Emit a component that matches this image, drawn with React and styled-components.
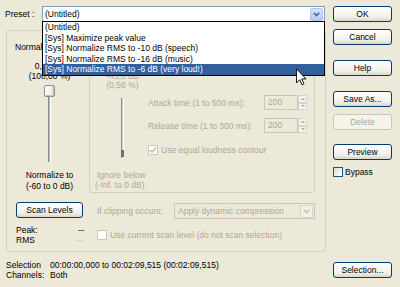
import React from 'react';
import styled, { createGlobalStyle } from 'styled-components';

const Global = createGlobalStyle`
  html, body { margin: 0; padding: 0; background: #ECE9D8; }
  body {
    font-family: "Liberation Sans", Arial, sans-serif;
    font-size: 8.5px;
    color: #000;
  }
  * { box-sizing: border-box; }
`;

const DISABLED = '#ACA899';
const GROUP = '#D0D0BF';

const Dialog = styled.div`
  position: relative;
  width: 400px;
  height: 287px;
  padding-top: 6px;
  display: grid;
  grid-template-columns: 327px 59px;
  column-gap: 6px;
  overflow: hidden;
  line-height: 10px;
`;

const LeftPanel = styled.div`
  padding-left: 6px;
  display: flex;
  flex-direction: column;
`;

const PresetRow = styled.div`
  display: flex;
  align-items: center;
  height: 16px;
`;

const PresetLabel = styled.span`
  width: 37px;
  margin-left: -1px;
`;

const Combo = styled.div`
  position: relative;
  width: 283px;
  height: 16px;
  background: #fff;
  border: 1px solid #7F9DB9;
  display: flex;
  align-items: center;
  padding-left: 2px;
`;

const ComboText = styled.span`
  flex: 1;
  color: ${p => (p.$disabled ? DISABLED : '#000')};
  white-space: nowrap;
`;

const DropButton = styled.div`
  width: 13px;
  height: 13px;
  margin-right: 1px;
  border-radius: 2px;
  display: flex;
  align-items: center;
  justify-content: center;
  background: ${p =>
    p.$disabled
      ? '#F0EFE8'
      : 'linear-gradient(#D6E2FC, #B7CAF5)'};
  border: 1px solid ${p => (p.$disabled ? '#D8D6CC' : '#B1C5F2')};
`;

const DropList = styled.div`
  position: absolute;
  top: 14px;
  left: -1px;
  width: 283px;
  background: #fff;
  border: 1px solid #000;
  z-index: 5;
`;

const DropItem = styled.div`
  height: 10.6px;
  line-height: 10.6px;
  padding-left: 2px;
  white-space: nowrap;
  background: ${p => (p.$selected ? '#30609E' : '#fff')};
  color: ${p => (p.$selected ? '#fff' : '#000')};
`;

const OuterGroup = styled.div`
  margin-top: 8px;
  width: 320px;
  height: 222px;
  border: 1px solid ${GROUP};
  border-radius: 3px;
  padding: 0 10px 0 9px;
  display: grid;
  grid-template-columns: 67px 226px;
  grid-template-rows: 162px 1fr;
  column-gap: 6px;
`;

const SliderCol = styled.div`
  display: flex;
  flex-direction: column;
  align-items: center;
  text-align: center;
  white-space: nowrap;
  color: ${p => (p.$disabled ? DISABLED : '#000')};
`;

const Line = styled.div`
  margin-top: ${p => p.$mt || 0}px;
  line-height: ${p => p.$lh || 10}px;
  align-self: ${p => (p.$left ? 'stretch' : 'auto')};
  text-align: ${p => (p.$left ? 'left' : 'center')};
  margin-left: ${p => p.$ml || 0}px;
  white-space: nowrap;
`;

const Slider = styled.div`
  margin-top: ${p => p.$mt}px;
  display: flex;
  flex-direction: column;
  align-items: center;
`;

const Thumb = styled.div`
  width: 11px;
  height: 12px;
  border: 1px solid #8E8F8F;
  border-radius: 2px;
  background: linear-gradient(90deg, #fff, #F2F1EA 60%, #D8D6CA);
  box-shadow: inset -1px -1px 0 #C5C3B6;
`;

const Track = styled.div`
  width: 3px;
  height: ${p => p.$h}px;
  border-left: 1px solid #8A8C8E;
  border-right: 1px solid #fff;
  background: ${p => (p.$disabled ? '#D6D4C8' : '#B4B6B4')};
  position: relative;
`;

const TrackMark = styled.div`
  position: absolute;
  left: -1px;
  bottom: 1px;
  width: 3px;
  height: 7px;
  background: #707068;
`;

const InnerGroup = styled.div`
  margin-top: 8px;
  border: 1px solid ${GROUP};
  border-radius: 3px;
  padding-left: 7px;
  display: grid;
  grid-template-columns: 51px 1fr;
`;

const Controls = styled.div`
  display: flex;
  flex-direction: column;
  padding-right: 7px;
  color: ${DISABLED};
`;

const ControlRow = styled.div`
  margin-top: ${p => p.$mt}px;
  height: ${p => p.$h || 15}px;
  display: flex;
  align-items: center;
  white-space: nowrap;
`;

const RowLabel = styled.span`
  flex: ${p => (p.$grow ? 1 : 'none')};
  width: ${p => (p.$w ? `${p.$w}px` : 'auto')};
  margin-left: ${p => p.$ml || 0}px;
  color: ${p => (p.$disabled ? DISABLED : '#000')};
`;

const SpinBox = styled.div`
  display: flex;
  height: 15px;
`;

const SpinInput = styled.div`
  width: 34px;
  height: 15px;
  border: 1px solid #C9C7BA;
  padding-left: 3px;
  line-height: 13px;
  color: ${DISABLED};
`;

const SpinButtons = styled.div`
  width: 9px;
  display: flex;
  flex-direction: column;
`;

const SpinBtn = styled.div`
  flex: 1;
  border: 1px solid #D8D6CC;
  background: #F4F3EE;
  display: flex;
  align-items: center;
  justify-content: center;
  &::after {
    content: '';
    border-left: 2px solid transparent;
    border-right: 2px solid transparent;
    ${p =>
      p.$up
        ? `border-bottom: 2px solid ${DISABLED};`
        : `border-top: 2px solid ${DISABLED};`}
  }
`;

const Check = styled.div`
  width: 10px;
  height: 10px;
  flex: none;
  border: 1px solid ${p => (p.$disabled ? '#CAC8BB' : '#1C5180')};
  background: ${p => (p.$disabled ? '#fff' : 'linear-gradient(135deg, #DCDCD7, #fff)')};
  display: flex;
  align-items: center;
  justify-content: center;
`;

const BottomLeft = styled.div`
  display: flex;
  flex-direction: column;
`;

const Button = styled.div`
  margin-top: ${p => p.$mt || 0}px;
  width: ${p => (p.$w ? `${p.$w}px` : '100%')};
  height: 16px;
  flex: none;
  border: 1px solid ${p => (p.$disabled ? '#C9C7BA' : '#003C74')};
  border-radius: 3px;
  background: ${p =>
    p.$disabled
      ? '#F5F4EA'
      : 'linear-gradient(#FFFFFF, #F1F0EA 70%, #D9D5CB)'};
  color: ${p => (p.$disabled ? DISABLED : '#000')};
  display: flex;
  align-items: center;
  justify-content: center;
  white-space: nowrap;
`;

const AutoButton = styled(Button)`
  margin-top: auto;
`;

const LevelRow = styled.div`
  margin-top: ${p => p.$mt || 0}px;
  height: 10px;
  display: flex;
  justify-content: space-between;
  padding-right: 0;
`;

const LevelValue = styled.span`
  color: ${p => (p.$disabled ? '#C5C2B2' : '#000')};
  margin-right: ${p => p.$mr || 0}px;
`;

const BottomRight = styled.div`
  padding-left: 8px;
  display: flex;
  flex-direction: column;
`;

const SelectBox = styled.div`
  flex: 1;
  height: 16px;
  border: 1px solid #C9C7BA;
  display: flex;
  align-items: center;
  padding-left: 3px;
`;

const InfoRows = styled.div`
  margin-top: 8px;
  display: grid;
  grid-template-columns: 44px 1fr;
  line-height: 10px;
  white-space: nowrap;
`;

const RightPanel = styled.div`
  display: flex;
  flex-direction: column;
  padding-bottom: 9px;
`;

const BypassRow = styled.div`
  margin-top: 6px;
  display: flex;
  align-items: center;
  height: 11px;
`;

const Cursor = styled.svg`
  position: absolute;
  left: 296px;
  top: 68px;
  z-index: 10;
`;

const Chevron = ({ color }) => (
  <svg width="7" height="5" viewBox="0 0 7 5">
    <path d="M0.8 0.8 L3.5 3.5 L6.2 0.8" fill="none" stroke={color} strokeWidth="1.6" />
  </svg>
);

const Tick = () => (
  <svg width="8" height="8" viewBox="0 0 8 8">
    <path d="M1 4 L3 6 L7 1.5" fill="none" stroke="#C2BFB0" strokeWidth="1.6" />
  </svg>
);

const presets = [
  '(Untitled)',
  '[Sys] Maximize peak value',
  '[Sys] Normalize RMS to -10 dB (speech)',
  '[Sys] Normalize RMS to -16 dB (music)',
  '[Sys] Normalize RMS to -6 dB (very loud!)',
];

export default function App() {
  return (
    <>
      <Global />
      <Dialog>
        <LeftPanel>
          <PresetRow>
            <PresetLabel>Preset :</PresetLabel>
            <Combo>
              <ComboText>(Untitled)</ComboText>
              <DropButton>
                <Chevron color="#4D6185" />
              </DropButton>
              <DropList>
                {presets.map((p, i) => (
                  <DropItem key={p} $selected={i === presets.length - 1}>
                    {p}
                  </DropItem>
                ))}
              </DropList>
            </Combo>
          </PresetRow>

          <OuterGroup>
            <SliderCol>
              <Line $mt={11} $left $ml={-1}>Normalize to:</Line>
              <Line $mt={9}>0,00 dB</Line>
              <Line>(100,00 %)</Line>
              <Slider $mt={4}>
                <Thumb />
                <Track $h={65} />
              </Slider>
              <Line $mt={8}>Normalize to</Line>
              <Line $mt={1}>(-60 to 0 dB)</Line>
            </SliderCol>

            <InnerGroup>
              <SliderCol $disabled>
                <Line $mt={32} $lh={9}>-45,0 dB</Line>
                <Line $lh={9}>(0,56 %)</Line>
                <Slider $mt={8}>
                  <Track $h={60} $disabled>
                    <TrackMark />
                  </Track>
                </Slider>
                <Line $mt={12} $left>Ignore below</Line>
                <Line $left $ml={-2}>(-Inf. to 0 dB)</Line>
              </SliderCol>
              <Controls>
                <ControlRow $mt={55}>
                  <RowLabel $grow $disabled>Attack time (1 to 500 ms):</RowLabel>
                  <SpinBox>
                    <SpinInput>200</SpinInput>
                    <SpinButtons>
                      <SpinBtn $up />
                      <SpinBtn />
                    </SpinButtons>
                  </SpinBox>
                </ControlRow>
                <ControlRow $mt={8}>
                  <RowLabel $grow $disabled>Release time (1 to 300 ms):</RowLabel>
                  <SpinBox>
                    <SpinInput>200</SpinInput>
                    <SpinButtons>
                      <SpinBtn $up />
                      <SpinBtn />
                    </SpinButtons>
                  </SpinBox>
                </ControlRow>
                <ControlRow $mt={12} $h={10}>
                  <Check $disabled>
                    <Tick />
                  </Check>
                  <RowLabel $ml={3} $disabled>Use equal loudness contour</RowLabel>
                </ControlRow>
              </Controls>
            </InnerGroup>

            <BottomLeft>
              <Button $mt={9} $w={67}>Scan Levels</Button>
              <LevelRow $mt={7}>
                <span>Peak:</span>
                <LevelValue $mr={-1}>--</LevelValue>
              </LevelRow>
              <LevelRow>
                <span>RMS</span>
                <LevelValue $disabled $mr={1}>--</LevelValue>
              </LevelRow>
            </BottomLeft>

            <BottomRight>
              <ControlRow $mt={10} $h={16}>
                <RowLabel $w={77} $disabled>If clipping occurs:</RowLabel>
                <SelectBox>
                  <ComboText $disabled>Apply dynamic compression</ComboText>
                  <DropButton $disabled>
                    <Chevron color="#C5C2B2" />
                  </DropButton>
                </SelectBox>
              </ControlRow>
              <ControlRow $mt={11} $h={10}>
                <Check $disabled />
                <RowLabel $ml={3} $disabled>
                  Use current scan level (do not scan selection)
                </RowLabel>
              </ControlRow>
            </BottomRight>
          </OuterGroup>

          <InfoRows>
            <span>Selection</span>
            <span>00:00:00,000 to 00:02:09,515 (00:02:09,515)</span>
            <span>Channels:</span>
            <span>Both</span>
          </InfoRows>
        </LeftPanel>

        <RightPanel>
          <Button>OK</Button>
          <Button $mt={7}>Cancel</Button>
          <Button $mt={15}>Help</Button>
          <Button $mt={15}>Save As...</Button>
          <Button $mt={7} $disabled>Delete</Button>
          <Button $mt={14}>Preview</Button>
          <BypassRow>
            <Check />
            <RowLabel $ml={2}>Bypass</RowLabel>
          </BypassRow>
          <AutoButton>Selection...</AutoButton>
        </RightPanel>

        <Cursor width="11" height="18" viewBox="0 0 12 19">
          <path
            d="M0.5 0.5 V16 L4 12.5 L6.5 18 L8.7 17 L6.3 11.6 H11 Z"
            fill="#fff"
            stroke="#000"
            strokeWidth="1"
          />
        </Cursor>
      </Dialog>
    </>
  );
}
